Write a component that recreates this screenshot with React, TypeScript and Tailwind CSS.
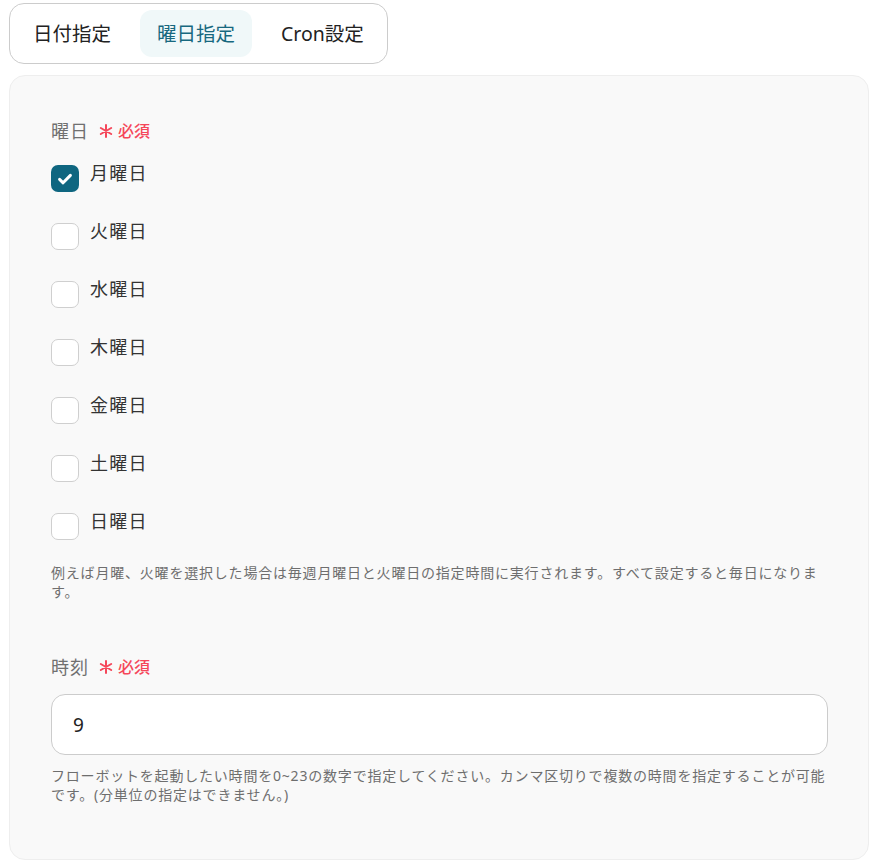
import React, { useState } from "react";

const days = ["月曜日", "火曜日", "水曜日", "木曜日", "金曜日", "土曜日", "日曜日"];

const tabs = ["日付指定", "曜日指定", "Cron設定"];

const font = { fontFamily: '"Noto Sans", "Noto Sans CJK JP", sans-serif' };

function Required() {
  return (
    <span className="ml-[10px] flex items-center gap-[5px] text-[16px] font-medium text-[#f5475a]">
      <svg width="14" height="14" viewBox="0 0 14 14" stroke="#f5475a" strokeWidth="2" strokeLinecap="round">
        <path d="M7 1v12M1.8 4l10.4 6M1.8 10l10.4-6" />
      </svg>
      必須
    </span>
  );
}

function Checkbox({ checked, onClick }: { checked: boolean; onClick: () => void }) {
  return (
    <button
      onClick={onClick}
      className={`flex h-[27px] w-[28px] shrink-0 items-center justify-center rounded-[7px] ${
        checked ? "bg-[#0f6680]" : "border border-[#cfcfcf] bg-white"
      }`}
    >
      {checked && (
        <svg width="18" height="18" viewBox="0 0 18 18" fill="none">
          <path d="M3.6 9.4l3.5 3.4 7.3-7.4" stroke="white" strokeWidth="3" strokeLinecap="round" strokeLinejoin="round" />
        </svg>
      )}
    </button>
  );
}

export default function App() {
  const [activeTab, setActiveTab] = useState(1);
  const [checked, setChecked] = useState<boolean[]>([true, false, false, false, false, false, false]);
  const [hour, setHour] = useState("9");

  return (
    <div className="min-h-screen bg-white pl-[9px] pr-[11px] pt-[3px]" style={font}>
      {/* mode switch */}
      <div className="inline-flex gap-3 rounded-[15px] border border-[#cccccc] bg-white p-[6px]">
        {tabs.map((t, i) => (
          <button
            key={t}
            onClick={() => setActiveTab(i)}
            className={`h-[47px] rounded-[12px] px-[17px] text-[19.5px] ${
              activeTab === i ? "bg-[#f0f8f9] text-[#17687f]" : "text-[#222]"
            }`}
          >
            {t}
          </button>
        ))}
      </div>

      <div className="mt-[11px] rounded-[16px] border border-[#eeeeee] bg-[#f9f9f9] pb-[55px] pl-[41px] pr-[40px] pt-[43px]">
        <div className="flex h-[24px] items-center">
          <span className="text-[18px] tracking-[1px] text-[#707070]">曜日</span>
          <Required />
        </div>

        <div className="mt-[22px] flex flex-col gap-[31px]">
          {days.map((d, i) => (
            <label key={d} className="flex h-[27px] items-center gap-[11px]">
              <Checkbox
                checked={checked[i]}
                onClick={() => setChecked((prev) => prev.map((v, j) => (j === i ? !v : v)))}
              />
              <span className="-mt-[11px] text-[18px] tracking-[1.3px] text-[#333]">{d}</span>
            </label>
          ))}
        </div>

        <p className="mt-[23px] text-[14px] leading-[19px] tracking-[0.8px] text-[#6e6e6e]">
          例えば月曜、火曜を選択した場合は毎週月曜日と火曜日の指定時間に実行されます。すべて設定すると毎日になります。
        </p>

        <div className="mt-[54px] flex h-[24px] items-center">
          <span className="text-[18px] tracking-[1px] text-[#707070]">時刻</span>
          <Required />
        </div>

        <input
          value={hour}
          onChange={(e) => setHour(e.target.value)}
          className="mt-[15px] h-[61px] w-full rounded-[14px] border border-[#cccccc] bg-white px-[21px] text-[19px] text-[#222] outline-none"
        />

        <p className="mt-[11px] text-[14px] leading-[19px] tracking-[0.8px] text-[#6e6e6e]">
          フローボットを起動したい時間を0~23の数字で指定してください。カンマ区切りで複数の時間を指定することが可能です。(分単位の指定はできません。)
        </p>
      </div>
    </div>
  );
}
